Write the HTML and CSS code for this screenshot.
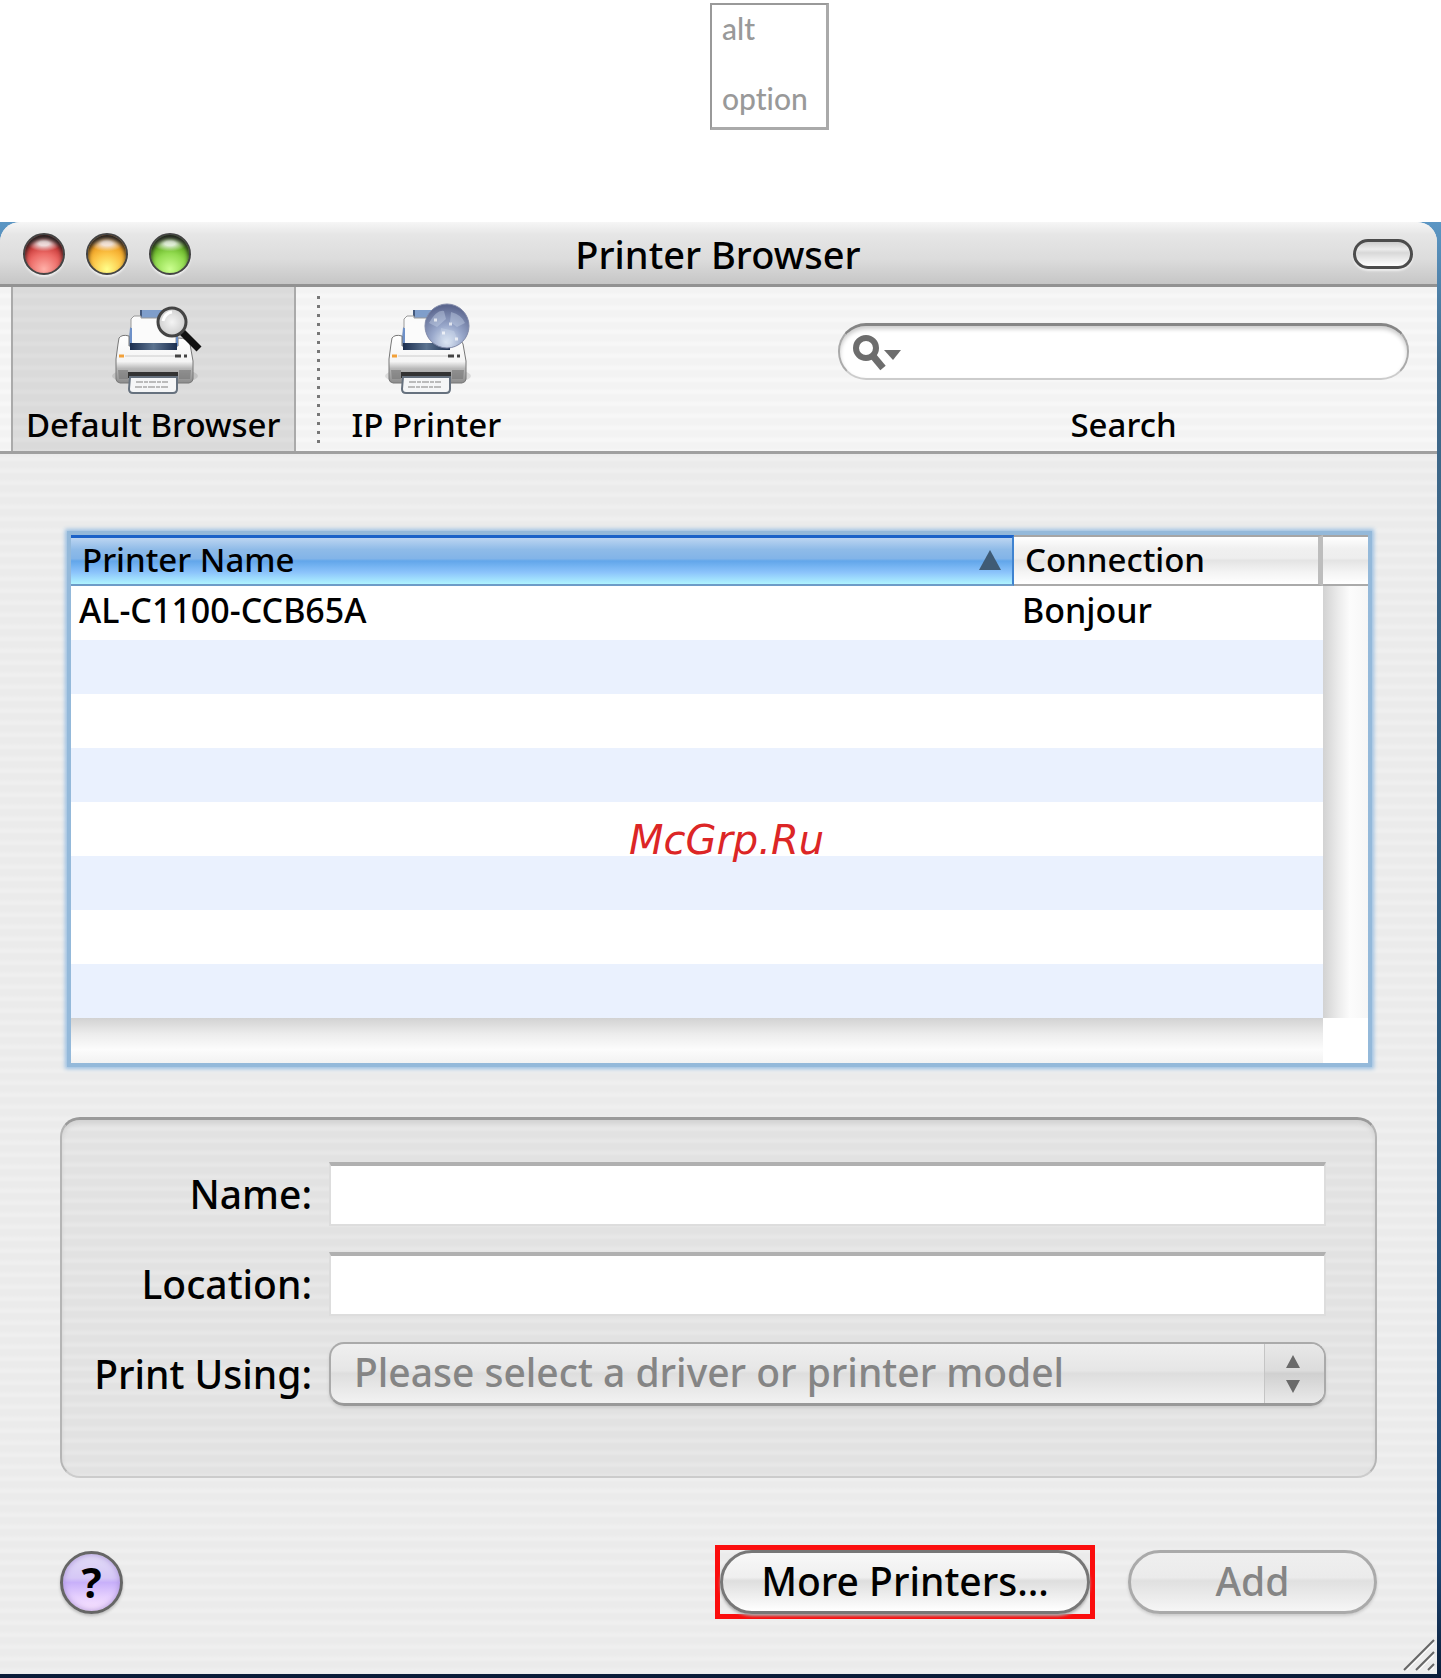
FILE: index.html
```html
<!DOCTYPE html>
<html lang="en">
<head>
    <meta charset="UTF-8">
    <meta name="viewport" content="width=device-width, initial-scale=1.0">
    <title>Printer Browser</title>
    <link rel="stylesheet" href="styles.css">
</head>
<body>
    <div class="key-row">
        <div class="key">
            <span>alt</span>
            <span>option</span>
        </div>
    </div>

    <div class="desktop">
        <main class="window">
            <header class="titlebar">
                <div class="lights">
                    <button class="light red" aria-label="Close"></button>
                    <button class="light yellow" aria-label="Minimize"></button>
                    <button class="light green" aria-label="Zoom"></button>
                </div>
                <h1>Printer Browser</h1>
                <button class="pill" aria-label="Toggle toolbar"></button>
            </header>

            <!-- shared icon parts -->
            <svg class="defs" aria-hidden="true">
                <defs>
                    <linearGradient id="body" x1="0" y1="0" x2="0" y2="1">
                        <stop offset="0" stop-color="#fff"/>
                        <stop offset="0.55" stop-color="#f4f4f4"/>
                        <stop offset="0.7" stop-color="#b8b8b8"/>
                        <stop offset="1" stop-color="#8c8c8c"/>
                    </linearGradient>
                    <linearGradient id="slot" x1="0" y1="0" x2="1" y2="0">
                        <stop offset="0" stop-color="#1c2f50"/>
                        <stop offset="0.5" stop-color="#5c7390"/>
                        <stop offset="1" stop-color="#1c2f50"/>
                    </linearGradient>
                    <radialGradient id="globe" cx="0.5" cy="0.85" r="0.8">
                        <stop offset="0" stop-color="#dfe9f5"/>
                        <stop offset="0.45" stop-color="#99a8cb"/>
                        <stop offset="1" stop-color="#5c678f"/>
                    </radialGradient>
                    <radialGradient id="lens">
                        <stop offset="0" stop-color="#f4f4f4"/>
                        <stop offset="1" stop-color="#cfcfcf"/>
                    </radialGradient>
                    <g id="printer">
                        <ellipse cx="41" cy="70" rx="43" ry="9" fill="#000" opacity="0.1"/>
                        <path d="M27 4h30v10H27z" fill="#7f9ecb"/>
                        <path d="M27 4v7" stroke="#44597c" stroke-width="2"/>
                        <path d="M16 22 19 18V40H14z" fill="#7592c0"/>
                        <path d="M4 38 5 32q3-4 10-2v10H64V32q10 0 12 6l3 17v18q0 3-4 4H6q-4-1-4-4V53z" fill="url(#body)" stroke="#777" stroke-width="1"/>
                        <path d="M17 13 20 10H27V12H62V40H17z" fill="#fbfbfb" stroke="#999" stroke-width="1"/>
                        <path d="M17 22v17M63 30v10" stroke="#6d90c8" stroke-width="2"/>
                        <path d="M16 37h47v7H16z" fill="url(#slot)"/>
                        <path d="M11 50h50" stroke="#ccc" stroke-width="1"/>
                        <path d="M5 50h5" stroke="#f2a13a" stroke-width="3"/>
                        <path d="M61 50h6M70 50h3" stroke="#444" stroke-width="3"/>
                        <path d="M4 64h10v9H5zM65 64h12l-1 9h-11z" fill="#777" opacity="0.6"/>
                        <path d="M14 66h50v6H14z" fill="#333"/>
                        <path d="M16 71h47v12q0 4-4 4H19q-4 0-4-4z" fill="#f5f6f7" stroke="#66717e" stroke-width="2"/>
                        <path d="M22 76h32M21 81h34" stroke="#bbb" stroke-width="2" stroke-dasharray="7 1 4 1"/>
                    </g>
                </defs>
            </svg>

            <nav class="toolbar">
                <button class="tool selected">
                    <svg width="78" height="92" viewBox="0 0 78 92" aria-hidden="true">
                        <use href="#printer"/>
                        <path d="M68 26 85 43" stroke="#111" stroke-width="7"/>
                        <circle cx="58" cy="16" r="14" fill="url(#lens)" stroke="#444" stroke-width="3"/>
                        <path d="M49 15q2-8 9-9" stroke="#fff" stroke-width="3" fill="none"/>
                    </svg>
                    <span>Default Browser</span>
                </button>
                <div class="dots"></div>
                <button class="tool">
                    <svg width="78" height="92" viewBox="0 0 78 92" aria-hidden="true">
                        <use href="#printer"/>
                        <circle cx="60" cy="20" r="22" fill="url(#globe)" stroke="#8089a8" stroke-width="1"/>
                        <path d="M42 17q8-14 15-12l2 8-9 8zM64 6q11 3 14 11l-8 4-7-5zM54 22l13 3 3 7-9 5-8-6z" fill="#cbd7ea" opacity="0.4"/>
                        <path d="M47 14h3M62 18h3M55 27h3M68 33h3" stroke="#fff" stroke-width="3" opacity="0.7"/>
                    </svg>
                    <span>IP Printer</span>
                </button>
                <div class="search">
                    <div class="search-box">
                        <svg width="52" height="44" viewBox="0 0 52 44" aria-hidden="true">
                            <circle cx="14" cy="18" r="10" fill="none" stroke="#6d6d6d" stroke-width="6"/>
                            <path d="M21 26 31 38" stroke="#6d6d6d" stroke-width="7"/>
                            <path d="M32 20h17l-8 10z" fill="#6d6d6d"/>
                        </svg>
                        <input type="text" id="search">
                    </div>
                    <label for="search">Search</label>
                </div>
            </nav>

            <section class="content">
                <div class="printer-list">
                    <table>
                        <thead>
                            <tr>
                                <th class="sorted" scope="col">
                                    <div class="sort">
                                        Printer Name
                                        <svg width="22" height="20" viewBox="0 0 22 20" aria-hidden="true"><path d="M11 0 22 20H0z" fill="#3f5b75"/></svg>
                                    </div>
                                </th>
                                <th class="connection" scope="col">Connection</th>
                            </tr>
                        </thead>
                        <tbody>
                            <tr><td>AL-C1100-CCB65A</td><td>Bonjour</td></tr>
                            <tr><td></td><td></td></tr>
                            <tr><td></td><td></td></tr>
                            <tr><td></td><td></td></tr>
                            <tr><td></td><td></td></tr>
                            <tr><td></td><td></td></tr>
                            <tr><td></td><td></td></tr>
                            <tr><td></td><td></td></tr>
                        </tbody>
                    </table>
                    <div class="side">
                        <div class="head-end"></div>
                        <div class="track-v"></div>
                    </div>
                    <div class="track-h"></div>
                    <div class="corner"></div>
                    <div class="watermark">McGrp.Ru</div>
                </div>

                <form class="details">
                    <label for="name">Name:</label>
                    <input type="text" id="name">
                    <label for="location">Location:</label>
                    <input type="text" id="location">
                    <label for="driver">Print Using:</label>
                    <div class="select">
                        <select id="driver" disabled>
                            <option>Please select a driver or printer model</option>
                        </select>
                        <div class="stepper">
                            <svg width="14" height="38" viewBox="0 0 14 38" aria-hidden="true"><path d="M7 0 14 13H0zM0 25H14L7 38z" fill="#6a6a6a"/></svg>
                        </div>
                    </div>
                </form>

                <footer class="actions">
                    <button class="help" aria-label="Help">?</button>
                    <div class="highlight">
                        <button class="aqua">More Printers…</button>
                    </div>
                    <button class="aqua add" disabled>Add</button>
                </footer>
            </section>

            <svg class="grip" width="34" height="34" viewBox="0 0 34 34" aria-hidden="true">
                <path d="M2 32 32 2M14 32 32 14M26 32l6-6" stroke="#666" stroke-width="2"/>
                <path d="M5 32 32 5M17 32 32 17M29 32l3-3" stroke="#fff" stroke-width="1"/>
            </svg>
        </main>
    </div>
</body>
</html>
```
FILE: styles.css
```css
* {
    box-sizing: border-box;
}
body {
    margin: 0;
    min-height: 100vh;
    display: flex;
    flex-direction: column;
    background-color: #fff;
    color: #000;
    font-family: "Noto Sans", "Open Sans", sans-serif;
    font-size: 39px;
    font-weight: 500;
}
button, input, select {
    font: inherit;
    color: inherit;
    margin: 0;
    padding: 0;
    border: none;
}

/* keyboard key */
.key-row {
    display: flex;
    justify-content: center;
    padding: 3px 0 92px 98px;
}
.key {
    display: flex;
    flex-direction: column;
    justify-content: space-between;
    width: 119px;
    height: 127px;
    padding: 5px 10px 11px;
    border: 2px solid #999;
    border-right: 3px solid #aaa;
    border-bottom: 3px solid #aaa;
    color: #999;
    font-family: Lato, sans-serif;
    font-size: 30px;
    font-variant-ligatures: none;
    line-height: 36px;
}

/* window */
.desktop {
    flex: 1;
    display: flex;
    padding: 0 4px 4px 0;
    background: linear-gradient(#5b96c4, #40698a 10%, #2b5a80 60%, #1c4876 92%, #0b1c38);
}
.window {
    position: relative;
    flex: 1;
    min-width: 0;
    border-radius: 20px 20px 0 0;
    background: repeating-linear-gradient(#ebebeb 0, #ebebeb 5px, #efefef 8px, #efefef 10px, #ebebeb 12px);
    overflow: hidden;
}
.defs {
    position: absolute;
    width: 0;
    height: 0;
}
.titlebar {
    display: grid;
    grid-template-columns: 1fr auto 1fr;
    align-items: center;
    height: 65px;
    padding: 2px 24px 0 23px;
    border-bottom: 3px solid #929292;
    background: linear-gradient(#f6f6f6, #e6e6e6 20%, #dcdcdc 60%, #c6c6c6);
}
.titlebar h1 {
    margin: 0;
    font-size: 38px;
    font-weight: 500;
    line-height: 60px;
}
.lights {
    display: flex;
    gap: 21px;
}
.light {
    width: 42px;
    height: 42px;
    border: 2px solid #444;
    border-radius: 50%;
    box-shadow: 0 2px 2px #eee, inset 0 4px 4px #222;
}
.red {
    background: radial-gradient(ellipse 17px 8px at 50% 22%, #eedada 30%, transparent), radial-gradient(circle at 50% 90%, #ffb0a8, #ec6a66 40%, #b52222 75%, #6c1010);
}
.yellow {
    background: radial-gradient(ellipse 17px 8px at 50% 22%, #f3e2d4 30%, transparent), radial-gradient(circle at 50% 90%, #ffff8a, #fcc345 40%, #e68c10 75%, #7a2a10);
}
.green {
    background: radial-gradient(ellipse 17px 8px at 50% 22%, #dfeed5 30%, transparent), radial-gradient(circle at 50% 90%, #ccff90, #93dc50 40%, #4e9a10 75%, #163c0c);
}
.pill {
    justify-self: end;
    width: 60px;
    height: 30px;
    border: 3px solid #4c4c4c;
    border-radius: 15px;
    background: linear-gradient(#ccc, #ececec 30%, #d8d8d8 45%, #fff);
    box-shadow: 0 2px 2px #eee;
}

/* toolbar */
.toolbar {
    display: flex;
    height: 167px;
    padding-left: 11px;
    border-bottom: 3px solid #a0a0a0;
    background: repeating-linear-gradient(#f3f3f3 0, #f3f3f3 5px, #f7f7f7 8px, #f7f7f7 10px, #f3f3f3 12px);
    font-size: 33px;
    line-height: 44px;
}
.tool {
    display: flex;
    flex-direction: column;
    align-items: center;
    padding: 19px 13px 0;
    border: solid transparent;
    border-width: 0 2px;
    background: none;
}
.tool svg {
    overflow: visible;
}
.tool span {
    margin-top: 5px;
}
.selected {
    border-color: #aaa;
    background: repeating-linear-gradient(#dadada 0, #dadada 5px, #dedede 8px, #dedede 10px, #dadada 12px);
}
.dots {
    width: 3px;
    height: 147px;
    margin: 9px 17px 0 21px;
    background: repeating-linear-gradient(#777 0, #777 3px, transparent 3px, transparent 9px);
}
.search {
    display: flex;
    flex-direction: column;
    align-items: center;
    width: 42%;
    margin-left: auto;
    padding: 36px 28px 0 0;
}
.search-box {
    display: flex;
    align-items: center;
    width: 100%;
    height: 57px;
    padding: 0 24px 0 12px;
    border: 2px solid #aaa;
    border-top: 3px solid #858585;
    border-bottom-color: #ccc;
    border-radius: 28px;
    background-color: #fff;
    box-shadow: inset 0 3px 4px #ccc;
}
.search-box input {
    flex: 1;
    min-width: 0;
    background: none;
    outline: none;
}
.search label {
    margin-top: 23px;
}

/* printer list */
.content {
    padding: 81px 60px 0;
}
.printer-list {
    position: relative;
    display: grid;
    grid-template-columns: 1fr 45px;
    margin: 0 9px 0 11px;
    background-color: #fff;
    font-size: 33px;
    box-shadow: 0 0 0 4px #94b9da, 0 0 4px 6px #9cc0e2;
}
table {
    width: 100%;
    table-layout: fixed;
    border-collapse: separate;
    border-spacing: 0;
}
th {
    height: 51px;
    padding: 0 11px 2px;
    border-bottom: 2px solid #aaa;
    font-weight: 500;
    line-height: 44px;
    text-align: left;
}
.sorted {
    border-top: 3px solid #1b62c8;
    border-right: 2px solid #3f83d0;
    border-bottom-color: #6d9cc8;
    background: linear-gradient(#bcd5f1, #8fbbe8 25%, #82b4e8 45%, #62a6ea 50%, #8cc4fb 75%, #b0f4ff);
}
.sort {
    display: flex;
    align-items: center;
    justify-content: space-between;
}
.connection {
    width: 309px;
    border-right: 5px solid #bdbdbd;
}
.connection, .head-end {
    border-top: 2px solid #a5a5a5;
    background: linear-gradient(#fff, #f0f0f0 25%, #eee 45%, #e4e4e4 50%, #f4f4f4 75%, #fff);
}
td {
    height: 54px;
    padding: 0 8px 6px;
    font-size: 34px;
    line-height: 44px;
}
tbody tr:nth-child(even) {
    background-color: #eaf1fe;
}
.side {
    display: flex;
    flex-direction: column;
}
.head-end {
    height: 51px;
    border-bottom: 2px solid #aaa;
}
.track-v {
    flex: 1;
    background: linear-gradient(to right, #d2d2d2, #ececec 35%, #fcfcfc 60%, #f6f6f6);
}
.track-h {
    height: 45px;
    background: linear-gradient(#d2d2d2, #ececec 35%, #fcfcfc 70%, #f2f2f2);
}
.watermark {
    position: absolute;
    top: 281px;
    left: 0;
    right: 0;
    padding-left: 14px;
    color: #dc2626;
    font-family: "DejaVu Sans", sans-serif;
    font-size: 40px;
    font-style: italic;
    font-weight: 400;
    line-height: 48px;
    text-align: center;
}

/* details */
.details {
    display: grid;
    grid-template-columns: 235px 1fr;
    gap: 26px 17px;
    align-items: center;
    height: 361px;
    margin-top: 54px;
    padding: 42px 49px 73px 15px;
    border: 2px solid #b5b5b5;
    border-top: 3px solid #9a9a9a;
    border-bottom-color: #ccc;
    border-radius: 20px;
    background: repeating-linear-gradient(#e2e2e2 0, #e2e2e2 5px, #e7e7e7 8px, #e7e7e7 10px, #e2e2e2 12px);
    box-shadow: inset 0 3px 4px #d2d2d2;
}
.details label {
    text-align: right;
    line-height: 52px;
    white-space: nowrap;
}
.details input {
    width: 100%;
    height: 64px;
    padding: 0 8px;
    border: 2px solid #ddd;
    border-top: 4px solid #b0b0b0;
    background-color: #fff;
}
.select {
    position: relative;
}
.select select {
    display: block;
    width: 100%;
    height: 64px;
    padding: 0 70px 4px 23px;
    appearance: none;
    border: 2px solid #aaa;
    border-bottom: 3px solid #999;
    border-radius: 15px;
    background: linear-gradient(#efefef, #e6e6e6 45%, #dedede 50%, #f2f2f2);
    box-shadow: 0 2px 3px #ccc;
    color: #858585;
    opacity: 1;
}
.stepper {
    position: absolute;
    top: 2px;
    right: 2px;
    bottom: 3px;
    display: flex;
    align-items: center;
    justify-content: center;
    width: 60px;
    padding-right: 4px;
    border-left: 1px solid #c5c5c5;
    border-radius: 0 13px 13px 0;
    background: linear-gradient(#e8e8e8, #dcdcdc 45%, #d0d0d0 50%, #eaeaea);
    pointer-events: none;
}

/* bottom buttons */
.actions {
    display: flex;
    align-items: center;
    margin-top: 67px;
}
.help {
    width: 63px;
    height: 63px;
    margin-right: auto;
    border: 3px solid #666;
    border-radius: 50%;
    background: linear-gradient(#e2dcf6, #d6c8f6 42%, #c8b0fa 50%, #e6d0fe 75%, #fbe6ff);
    box-shadow: 0 2px 3px #bbb, inset 0 0 6px #a88fd8;
    font-size: 42px;
    font-weight: 700;
    line-height: 50px;
}
.highlight {
    display: flex;
    width: 380px;
    margin-right: 33px;
    border: 5px solid #fb0d0d;
}
.aqua {
    width: 100%;
    height: 64px;
    padding-bottom: 4px;
    border: 3px solid #777;
    border-radius: 32px;
    background: linear-gradient(#f8f8f8, #efefef 42%, #dedede 48%, #fff);
    box-shadow: 0 2px 3px #aaa;
}
.add {
    width: 249px;
    border-color: #aaa;
    background: linear-gradient(#efefef, #ebebeb 42%, #e0e0e0 48%, #f6f6f6);
    box-shadow: 0 2px 3px #ccc;
    color: #858585;
}
.grip {
    position: absolute;
    right: 1px;
    bottom: 2px;
}
```
